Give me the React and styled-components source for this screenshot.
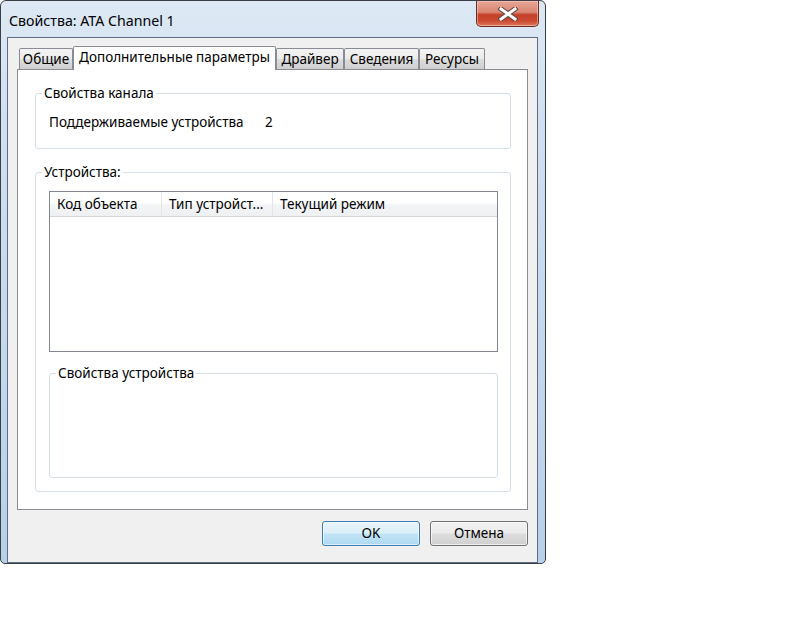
import styled, { createGlobalStyle } from "styled-components";

const Global = createGlobalStyle`
  html, body {
    margin: 0;
    background: #fff;
  }
  body {
    font-family: "Noto Sans", "Open Sans", sans-serif;
    font-size: 13.5px;
    color: #000;
  }
`

const Window = styled.div`
  width: 544px;
  height: 562px;
  border: 1px solid #3b3f45;
  border-radius: 6px 6px 5px 5px;
  background: linear-gradient(180deg, #dde8f4 0%, #cfdfef 25%, #c1d6ec 70%, #b9d0e9 100%);
  display: flex;
  flex-direction: column;
`

const TitleBar = styled.div`
  height: 36px;
  display: flex;
  align-items: flex-start;
  justify-content: space-between;
`

const Title = styled.div`
  padding: 11px 0 0 8px;
  font-size: 14.2px;
  line-height: 17px;
  color: #000;
`

const CloseButton = styled.div`
  width: 61px;
  height: 25px;
  margin-right: 6px;
  border: 1px solid #6b2f25;
  border-top: none;
  border-radius: 0 0 5px 5px;
  background: linear-gradient(180deg, #e6a697 0%, #d98672 45%, #c5412a 55%, #cb4a31 80%, #df7a5f 100%);
  box-shadow: inset 0 0 0 1px rgba(255, 220, 210, 0.45);
  display: flex;
  align-items: center;
  justify-content: center;
`

const Client = styled.div`
  height: 517px;
  margin: 0 7px 0 6px;
  border: 1px solid #5d6e82;
  background: #f0f0f0;
  padding: 8px 9px 0 9px;
  display: flex;
  flex-direction: column;
`

const TabRow = styled.div`
  display: flex;
  align-items: flex-end;
  height: 24px;
  padding-left: 2px;
  margin-bottom: -1px;
  position: relative;
  z-index: 1;
`

const Tab = styled.div`
  box-sizing: border-box;
  width: ${(p) => p.$w}px;
  height: ${(p) => (p.$active ? 24 : 21)}px;
  margin-bottom: ${(p) => (p.$active ? 0 : 1)}px;
  border: 1px solid #898c95;
  border-bottom: none;
  border-radius: 2px 2px 0 0;
  background: ${(p) =>
    p.$active ? "#fff" : "linear-gradient(180deg, #f3f3f3 0%, #ebebeb 50%, #dddddd 51%, #cfcfcf 100%)"};
  display: flex;
  align-items: center;
  justify-content: center;
  padding-bottom: ${(p) => (p.$active ? 2 : 0)}px;
  white-space: nowrap;
`

const Panel = styled.div`
  box-sizing: border-box;
  height: 441px;
  border: 1px solid #898c95;
  background: #fff;
  padding: 16px 16px 0 17px;
`

const Group = styled.fieldset`
  box-sizing: border-box;
  width: ${(p) => p.$w}px;
  height: ${(p) => p.$h}px;
  margin: ${(p) => p.$mt || 0}px 0 0 0;
  padding: 0;
  border: 1px solid #d5dfe5;
  border-radius: 3px;
  min-width: 0;
`

const Legend = styled.legend`
  margin-left: 6px;
  padding: 0 2px;
  line-height: 15px;
`

const GroupBody = styled.div`
  padding: ${(p) => p.$pad};
`

const InfoRow = styled.div`
  display: flex;
  line-height: 16px;
`

const InfoLabel = styled.span`
  width: 216px;
`

const ListView = styled.div`
  box-sizing: border-box;
  width: 449px;
  height: 161px;
  border: 1px solid #828790;
  background: #fff;
`

const Header = styled.div`
  display: flex;
  height: 24px;
  border-bottom: 1px solid #d5d5d5;
  background: linear-gradient(180deg, #ffffff 0%, #ffffff 45%, #f3f4f6 55%, #eef0f2 100%);
`

const HeaderCell = styled.div`
  box-sizing: border-box;
  width: ${(p) => (p.$w ? `${p.$w}px` : "auto")};
  flex: ${(p) => (p.$w ? "none" : "1")};
  padding: 1px 0 0 7px;
  display: flex;
  align-items: center;
  border-right: ${(p) => (p.$w ? "1px solid #e3e5e8" : "none")};
  white-space: nowrap;
  overflow: hidden;
`

const ButtonRow = styled.div`
  display: flex;
  justify-content: flex-end;
  gap: 10px;
  margin-top: 11px;
`

const Button = styled.div`
  box-sizing: border-box;
  width: 98px;
  height: 25px;
  border: 1px solid ${(p) => (p.$default ? "#3c7fb1" : "#707070")};
  border-radius: 3px;
  background: ${(p) =>
    p.$default
      ? "linear-gradient(180deg, #e8f5fc 0%, #dbeffa 48%, #c3e4f7 52%, #aed9f1 100%)"
      : "linear-gradient(180deg, #f2f2f2 0%, #ebebeb 48%, #dddddd 52%, #cfcfcf 100%)"};
  box-shadow: inset 0 0 0 1px ${(p) => (p.$default ? "rgba(255,255,255,0.55)" : "rgba(255,255,255,0.7)")};
  display: flex;
  align-items: center;
  justify-content: center;
`

function CloseIcon() {
  return (
    <svg width="22" height="14" viewBox="0 0 22 14">
      <path d="M4 2 L18 12 M18 2 L4 12" stroke="#5a4a48" strokeWidth="5" strokeLinecap="square" />
      <path d="M4 2 L18 12 M18 2 L4 12" stroke="#fff" strokeWidth="3" strokeLinecap="square" />
    </svg>
  );
}

const tabs = [
  { name: "Общие", w: 54 },
  { name: "Дополнительные параметры", w: 203, active: true },
  { name: "Драйвер", w: 68 },
  { name: "Сведения", w: 75 },
  { name: "Ресурсы", w: 66 },
];

export default function App() {
  return (
    <>
      <Global />
      <Window>
        <TitleBar>
          <Title>Свойства: ATA Channel 1</Title>
          <CloseButton>
            <CloseIcon />
          </CloseButton>
        </TitleBar>
        <Client>
          <TabRow>
            {tabs.map((t) => (
              <Tab key={t.name} $w={t.w} $active={t.active}>
                {t.name}
              </Tab>
            ))}
          </TabRow>
          <Panel>
            <Group $w={476} $h={63}>
              <Legend>Свойства канала</Legend>
              <GroupBody $pad="13px 0 0 13px">
                <InfoRow>
                  <InfoLabel>Поддерживаемые устройства</InfoLabel>
                  <span>2</span>
                </InfoRow>
              </GroupBody>
            </Group>
            <Group $w={476} $h={327} $mt={16}>
              <Legend>Устройства:</Legend>
              <GroupBody $pad="11px 0 0 13px">
                <ListView>
                  <Header>
                    <HeaderCell $w={112}>Код объекта</HeaderCell>
                    <HeaderCell $w={111}>Тип устройст...</HeaderCell>
                    <HeaderCell>Текущий режим</HeaderCell>
                  </Header>
                </ListView>
                <Group $w={449} $h={112} $mt={14}>
                  <Legend>Свойства устройства</Legend>
                </Group>
              </GroupBody>
            </Group>
          </Panel>
          <ButtonRow>
            <Button $default>OK</Button>
            <Button>Отмена</Button>
          </ButtonRow>
        </Client>
      </Window>
    </>
  );
}
